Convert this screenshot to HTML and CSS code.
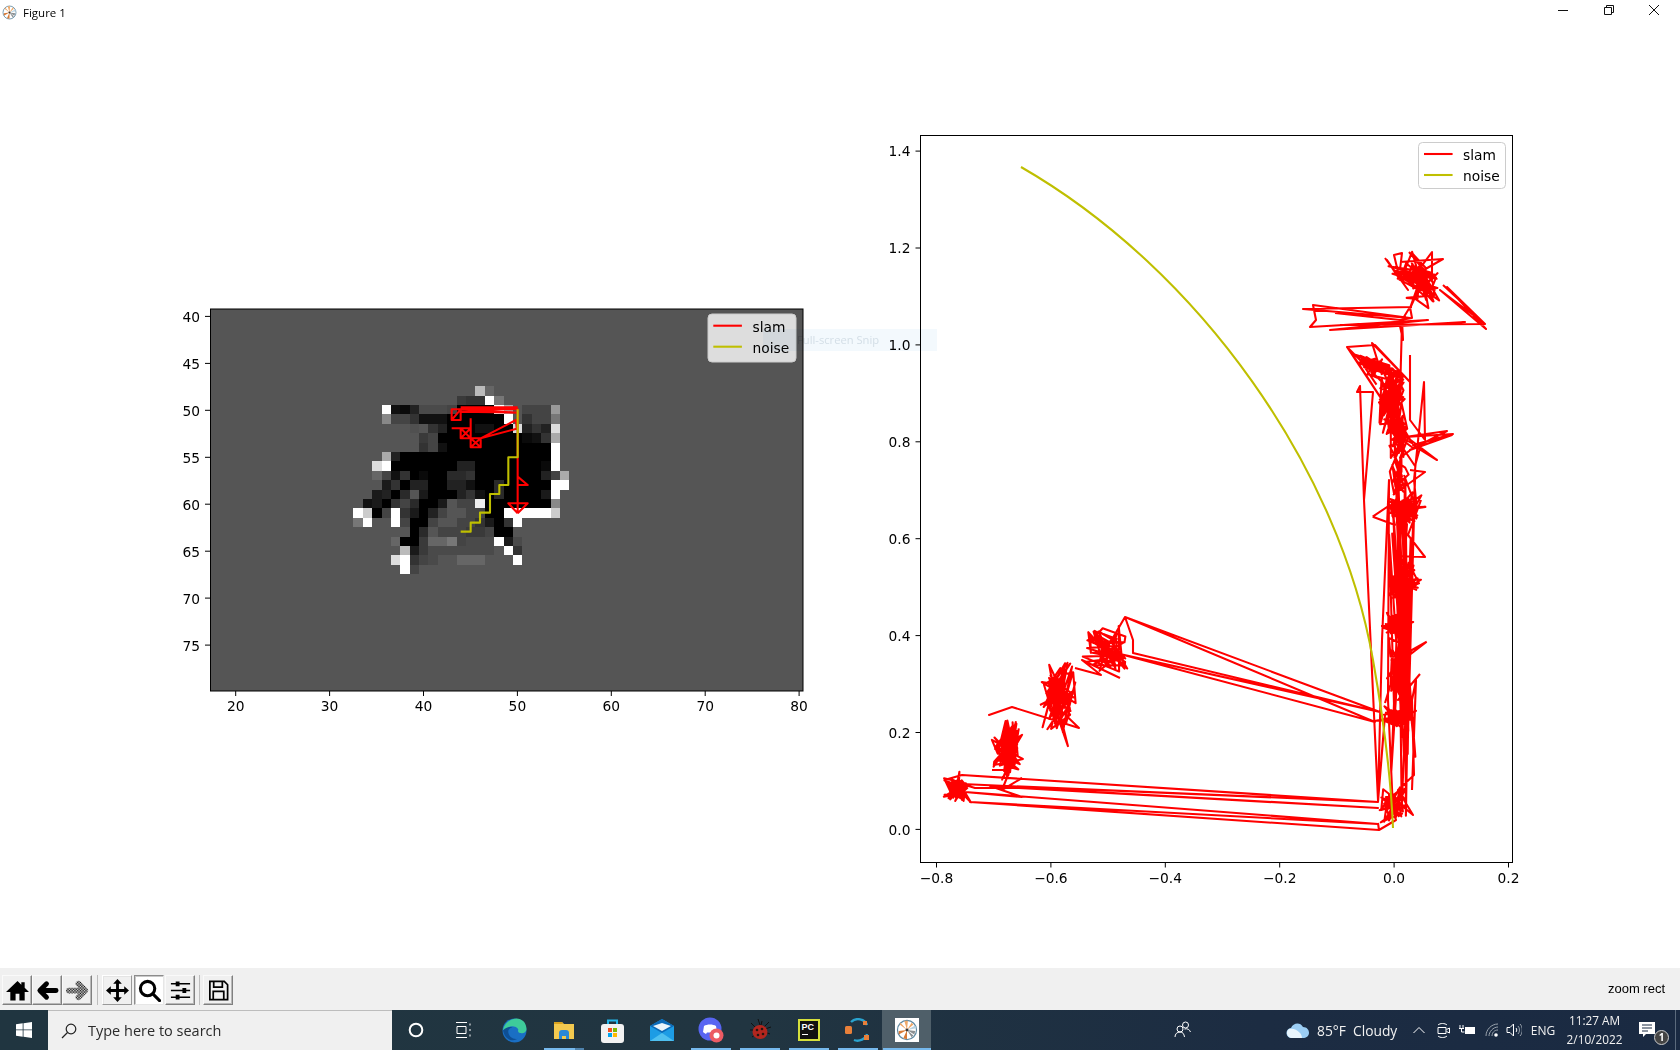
FILE: index.html
```html
<!DOCTYPE html>
<html lang="en">
<head>
<meta charset="utf-8">
<title>Figure 1</title>
<link rel="stylesheet" href="styles.css">
</head>
<body>
<svg class="defs" width="0" height="0" aria-hidden="true">
  <defs>
    <pattern id="dither" width="2" height="2" patternUnits="userSpaceOnUse" patternTransform="scale(.82)">
      <rect width="1" height="1" fill="#000"/><rect x="1" y="1" width="1" height="1" fill="#000"/>
    </pattern>
    <symbol id="mpl" viewBox="0 0 24 24">
      <circle cx="12" cy="12" r="10.4" fill="#fff" stroke="#5f8aa3" stroke-width="1.3"/>
      <path d="M12 12 4 6l1-2zM12 12 9 2h4zM12 12l5-8 2 2z" fill="#f0a868"/>
      <path d="M12 12 3 13v4zM12 12l-4 9 4 1z" fill="#d87a35"/>
      <path d="M12 12l9 1-1 4zM12 12l5 8 2-2z" fill="#8a8f92"/>
      <path d="M12 12 21 7l1 3z" fill="#b9d3e2"/>
      <circle cx="12" cy="12" r="1.6" fill="#333"/>
    </symbol>
  </defs>
</svg>

<header class="titlebar">
  <svg class="title-icon" width="15" height="15"><use href="#mpl"/></svg>
  <span class="title-text">Figure 1</span>
  <div class="winctl">
    <span class="winbtn"><svg width="10" height="10" viewBox="0 0 10 10"><path d="M0 5.5h10" class="ctl"/></svg></span>
    <span class="winbtn"><svg width="10" height="10" viewBox="0 0 10 10"><path d="M.5 2.5h7v7h-7zM2.5 2.5v-2h7v7h-2" class="ctl"/></svg></span>
    <span class="winbtn"><svg width="10" height="10" viewBox="0 0 10 10"><path d="M0 0l10 10M10 0L0 10" class="ctl"/></svg></span>
  </div>
</header>

<main class="figure">
  <svg class="canvas" width="1680" height="944" viewBox="0 24 1680 944">
    <!-- left axes -->
    <rect x="210.5" y="309" width="592.500" height="382" class="bgmap"/>
    <g id="heat" shape-rendering="crispEdges"></g>
    <g transform="translate(340 370) scale(.33333)">
      <path class="red3" d="M533 430V118H335V150L362 118V150H335M362 118 533 128 362 125M533 430 505 400H563L533 430M533 320 563 345H533M392 145V175H335M392 175H362V205H392V175L362 205M362 175 392 205M392 205 392 232H422V205H392L422 232 392 232 422 205 528 150 530 176 422 205M362 112H533"/>
      <path class="yel3" d="M533 118V262H505V345H478V372H450V428H420V458H392V485H362"/>
    </g>
    <rect x="210.5" y="309" width="592.500" height="382" class="frame"/>
    <path class="tick" d="M235.7 691v5M329.6 691v5M423.5 691v5M517.4 691v5M611.3 691v5M705.2 691v5M799.1 691v5M210 316.4h-5M210 363.4h-5M210 410.300h-5M210 457.3h-5M210 504.2h-5M210 551.2h-5M210 598.1h-5M210 645.1h-5"/>
    <g class="lab mid">
      <text x="235.7" y="711">20</text><text x="329.6" y="711">30</text><text x="423.5" y="711">40</text><text x="517.4" y="711">50</text><text x="611.3" y="711">60</text><text x="705.2" y="711">70</text><text x="799.1" y="711">80</text>
    </g>
    <g class="lab end">
      <text x="200" y="322">40</text><text x="200" y="369">45</text><text x="200" y="416">50</text><text x="200" y="463">55</text><text x="200" y="510">60</text><text x="200" y="557">65</text><text x="200" y="604">70</text><text x="200" y="651">75</text>
    </g>
    <rect x="708" y="314" width="88" height="48" rx="4" class="legend"/>
    <path class="red" d="M713.3 325.7h28.6"/><path class="yel" d="M713.3 346.7h28.6"/>
    <g class="lab"><text x="752.6" y="332">slam</text><text x="752.6" y="353">noise</text></g>

    <!-- right axes -->
    <g id="scribble"></g>
    <path class="yel" d="M1021 167C1200 270 1340 470 1373 660C1384 722 1391 780 1393 828"/>
    <rect x="920.5" y="135.5" width="592" height="727" class="frame"/>
    <path class="tick" d="M936.5 862.5v5M1050.9 862.5v5M1165.3 862.5v5M1279.7 862.5v5M1394.1 862.5v5M1508.5 862.5v5M920.5 829.4h-5M920.5 732.5h-5M920.5 635.6h-5M920.5 538.7h-5M920.5 441.8h-5M920.5 344.9h-5M920.5 248h-5M920.5 151.1h-5"/>
    <g class="lab mid">
      <text x="936.5" y="883">−0.8</text><text x="1050.9" y="883">−0.6</text><text x="1165.3" y="883">−0.4</text><text x="1279.7" y="883">−0.2</text><text x="1394.1" y="883">0.0</text><text x="1508.5" y="883">0.2</text>
    </g>
    <g class="lab end">
      <text x="910.5" y="834.7">0.0</text><text x="910.5" y="737.8">0.2</text><text x="910.5" y="640.9">0.4</text><text x="910.5" y="544">0.6</text><text x="910.5" y="447.1">0.8</text><text x="910.5" y="350.2">1.0</text><text x="910.5" y="253.3">1.2</text><text x="910.5" y="156.4">1.4</text>
    </g>
    <rect x="1418.5" y="142.5" width="87" height="46" rx="4" class="legend-light"/>
    <path class="red" d="M1424 154h28.6"/><path class="yel" d="M1424 175h28.6"/>
    <g class="lab"><text x="1463" y="159.500">slam</text><text x="1463" y="180.500">noise</text></g>

    <!-- leftover snip flyout -->
    <rect x="763" y="329" width="174" height="22" class="ghost"/>
    <text x="797" y="344" class="ghost-text">Full-screen Snip</text>
  </svg>
</main>

<section class="toolbar">
  <button class="tb"><svg viewBox="0 0 24 24"><path d="M12 2 0 13.500H4.500V22.500H10V15.500h4V22.500h5.500V13.500H24L19.500 9.200V3.500h-3.500v2.400z"/></svg></button>
  <button class="tb"><svg viewBox="0 0 24 24"><path class="arrow" d="M11 5 4 12l7 7M5 12h16"/></svg></button>
  <button class="tb"><svg viewBox="0 0 24 24"><path class="arrow dith" d="M13 5l7 7-7 7M19 12H3"/></svg></button>
  <span class="sep"></span>
  <button class="tb lit"><svg viewBox="0 0 24 24"><path d="M12 0l4.500 5H13.500V10.500H19V7.500l5 4.500-5 4.500V13.500H13.500V19h3L12 24l-4.500-5h3V13.500H5v3L0 12l5-4.500v3h5.500V5h-3z"/></svg></button>
  <button class="tb on"><svg viewBox="0 0 24 24"><circle cx="10" cy="10" r="7.500" class="lens"/><path class="lens" d="M15.500 15.500l7 7"/></svg></button>
  <button class="tb"><svg viewBox="0 0 24 24"><path class="thin" d="M2 5h20M2 12h20M2 19h20"/><path d="M7 2.500h4v5H7zM14 9.500h4v5h-4zM7 16.500h4v5H7z"/></svg></button>
  <span class="sep"></span>
  <button class="tb"><svg viewBox="0 0 24 24"><path class="floppy" d="M3 2.500h15l3.500 3.500v15.500h-18.500zM7 2.500v6h9v-6M6.500 21.500v-8.500h11v8.500"/></svg></button>
  <span class="status">zoom rect</span>
</section>

<footer class="taskbar">
  <span class="start"><svg width="16" height="16" viewBox="0 0 16 16"><path d="M0 2.300 6.700 1.300V7.500H0zM7.500 1.200 16 0V7.500H7.500zM0 8.300H6.700V14.700L0 13.700zM7.500 8.300H16V16L7.500 14.800z" fill="#fff"/></svg></span>
  <label class="search">
    <svg width="16" height="16" viewBox="0 0 16 16"><circle cx="10" cy="6" r="4.800" class="sico"/><path class="sico" d="M6.500 9.500 1 15"/></svg>
    <span class="search-text">Type here to search</span>
  </label>
  <span class="tbtn"><svg width="16" height="16" viewBox="0 0 16 16"><circle cx="8" cy="8" r="6.300" class="white2"/></svg></span>
  <span class="tbtn"><svg width="16" height="16" viewBox="0 0 16 16"><path class="white1" d="M0 .5h11M0 15.500h11M1 4.500h9v7H1zM14 1.500v2M14 7v2M14 12.500v2"/></svg></span>

  <div class="apps">
    <span class="app"><svg width="25" height="25" viewBox="0 0 24 24"><circle cx="12" cy="12" r="11.500" fill="#1a6fc4"/><path d="M1 11C3 3 10 .5 14 .5c5 0 9.500 4 9.500 10 0 3-3 4.500-6 4-2-.4-2.500-2-1.800-3.500C14 8 9 7 6 9c-2.500 1.600-4 3.500-5 2z" fill="#3ecb9a"/><path d="M6 13c0 5 5 8 9 7-5 3-12 1-14-8 2-3 7-4 9-3-2 0-4 2-4 4z" fill="#0e4f94"/></svg></span>
    <span class="app run-file"><svg width="22" height="20" viewBox="0 0 22 20"><path d="M1 2h8l2 2h10v15H1z" fill="#f3c94f"/><path d="M1 2h8l1 2H1z" fill="#d9a21e"/><path d="M6 13c0-2 1-3 3-3h4c2 0 3 1 3 3v6h-3v-3H9v3H6z" fill="#2b88d8"/></svg></span>
    <span class="app"><svg width="23" height="25" viewBox="0 0 23 25"><path class="bag" d="M7 7V2.500h9V7"/><rect y="6" width="23" height="19" rx="3" fill="#f2f2f2"/><rect x="7" y="10" width="4" height="4" fill="#f25022"/><rect x="12" y="10" width="4" height="4" fill="#7fba00"/><rect x="7" y="15" width="4" height="4" fill="#00a4ef"/><rect x="12" y="15" width="4" height="4" fill="#ffb900"/></svg></span>
    <span class="app"><svg width="24" height="22" viewBox="0 0 24 22"><path d="M0 7 12 0l12 7v15H0z" fill="#1d9ce5"/><path d="M0 7 12 0l12 7-12 7z" fill="#0b6ab8"/><path d="M3 7 12 4l9 3-9 5z" fill="#e9f4fb"/><path d="M0 22 12 14l12 8z" fill="#4fc0f0"/></svg></span>
    <span class="app run"><svg width="26" height="26" viewBox="0 0 26 26"><circle cx="12" cy="12" r="11.500" fill="#5865f2"/><path d="M6 9c3-2 9-2 12 0l1 6c-2 1.500-3 2-3 2l-1-1.500h-6L8 17s-1-.5-3-2z" fill="#fff"/><circle cx="18.500" cy="18.500" r="7" fill="#ec5b63"/><circle cx="18.500" cy="18.500" r="3" fill="#fff"/></svg></span>
    <span class="app run"><svg width="24" height="24" viewBox="0 0 24 24"><path class="bugleg" d="M3 5l5 5M2 12h5M4 19l4-3M21 4l-5 5M23 9l-6 2M22 16l-5-2M14 3l-1 4M10 1l2 6"/><ellipse cx="12" cy="14" rx="7.500" ry="7" fill="#b3261e"/><circle cx="9" cy="12" r="1.300" fill="#2a1410"/><circle cx="14" cy="11" r="1.300" fill="#2a1410"/><circle cx="10" cy="17" r="1.300" fill="#2a1410"/><circle cx="15" cy="16" r="1.300" fill="#2a1410"/></svg></span>
    <span class="app run"><span class="pc"><span class="pc-t">PC</span><span class="pc-l"></span></span></span>
    <span class="app run"><svg width="25" height="25" viewBox="0 0 25 25"><path class="ring" d="M6 4C11-1 20 1 22 7M22 16c-1 5-8 8-13 6"/><rect y="8" width="7" height="8" rx="1.500" fill="#e9803a"/><rect x="18" y="3" width="4" height="4" fill="#e9803a"/><rect x="19" y="17" width="5" height="5" fill="#e9803a"/></svg></span>
    <span class="app active"><span class="tile"><svg width="22" height="22"><use href="#mpl"/></svg></span></span>
  </div>

  <div class="tray">
    <span class="t-people"><svg width="18" height="18" viewBox="0 0 18 18"><circle cx="11.500" cy="4" r="3" class="white1"/><circle cx="6" cy="8" r="3" class="white1"/><path class="white1" d="M1 16c0-3 2-5 5-5s4 2 4.500 5M10.500 8c3-.8 5 .5 6 3"/></svg></span>
    <span class="t-weather">
      <svg width="23" height="16" viewBox="0 0 23 16"><path d="M6 16a5 5 0 0 1-1-10C7 1 14-.5 17 5c4 0 6 3 6 6s-3 5-6 5z" fill="#9bcdf4"/><path d="M6 16a5 5 0 0 1-3-9c3-1 8 0 11 4 2 2 2 5 2 5z" fill="#e9f5fd"/></svg>
      <span>85°F&nbsp; Cloudy</span>
    </span>
    <span class="t-i w26"><svg width="12" height="8" viewBox="0 0 12 8"><path class="white1" d="M.5 7 6 1.500 11.500 7"/></svg></span>
    <span class="t-i w23"><svg width="13" height="17" viewBox="0 0 13 17"><path class="white1" d="M1 3c2-2 7-2 9 0M1 14c2 2 7 2 9 0M1 5.500h8v6H1zM9.500 7.500 12.500 6v5l-3-1.500"/></svg></span>
    <span class="t-i w25"><svg width="17" height="12" viewBox="0 0 17 12"><path d="M6 3h10v7H6z" fill="#fff"/><path class="white1" d="M1 1v3M4 1v3M0 4.500h5M2.500 5v3h3"/></svg></span>
    <span class="t-i w24"><svg width="14" height="14" viewBox="0 0 14 14"><path class="dim1" d="M1 13C1 7 6 1 13 1M4 13c0-4 4-9 9-9M7 13c0-3 2-6 6-6"/><circle cx="11" cy="12" r="1.800" fill="#fff"/></svg></span>
    <span class="t-i w20"><svg width="16" height="14" viewBox="0 0 16 14"><path class="white1" d="M1 4.500h3L7.500 1v12L4 9.500H1zM10 5c1 1 1 3 0 4"/><path class="dim1" d="M12 3c2 2 2 6 0 8M14 1c3 3 3 9 0 12"/></svg></span>
    <span class="t-eng">ENG</span>
    <span class="t-clock"><span>11:27 AM</span><span>2/10/2022</span></span>
    <span class="t-notif">
      <svg width="16" height="16" viewBox="0 0 16 16"><path d="M0 0h16v12H7l-3 3v-3H0z" fill="#fff"/><path d="M3 3h10M3 6h10M3 9h6" stroke="#1b2a42" stroke-width="1"/></svg>
      <span class="badge">1</span>
    </span>
    <span class="t-desk"></span>
  </div>
</footer>
<script src="script.js"></script>
</body>
</html>
```

FILE: styles.css
```css
* { box-sizing: border-box; }
html, body { margin: 0; height: 100%; }
body {
  width: 1680px; height: 1050px; overflow: hidden;
  display: flex; flex-direction: column;
  background: #fff;
  font-family: "Open Sans", "Noto Sans", sans-serif;
}
.defs { position: absolute; }

.titlebar { height: 24px; display: flex; align-items: center; padding-left: 2px; flex: none; }
.title-icon { margin-right: 6px; }
.title-text { font-size: 11.5px; color: #000; }
.winctl { margin-left: auto; margin-right: 3px; display: flex; align-self: flex-start; padding-top: 5px; }
.winbtn { width: 45.5px; display: flex; justify-content: center; }
.ctl { fill: none; stroke: #111; stroke-width: 1; }

.figure { height: 944px; flex: none; }
.canvas { display: block; }
.bgmap { fill: #555; }
.frame { fill: none; stroke: #000; stroke-width: 1; }
.tick { fill: none; stroke: #000; stroke-width: 1; }
.lab text { font-family: "DejaVu Sans", sans-serif; font-size: 13.8px; fill: #000; }
.mid { text-anchor: middle; }
.end { text-anchor: end; }
.legend { fill: #ddd; stroke: #ccc; stroke-width: 1; }
.legend-light { fill: #fff; stroke: #ccc; stroke-width: 1; }
.red { fill: none; stroke: #f00; stroke-width: 2.08; stroke-linejoin: round; }
.yel { fill: none; stroke: #bfbf00; stroke-width: 2.08; stroke-linejoin: round; }
.red3 { fill: none; stroke: #f00; stroke-width: 6.25; stroke-linejoin: round; }
.yel3 { fill: none; stroke: #bfbf00; stroke-width: 6.25; stroke-linejoin: round; }
.ghost { fill: #f3f9fd; mix-blend-mode: multiply; }
.ghost-text { font-family: "Open Sans", sans-serif; font-size: 11.2px; fill: #dfe5e9; mix-blend-mode: multiply; }

.toolbar {
  height: 42px; flex: none; background: #f0f0f0;
  display: flex; align-items: flex-start; padding: 7px 0 0 2px;
}
.tb {
  width: 30px; height: 30px; padding: 2px; margin: 0;
  background: #f0f0f0;
  border: 1px solid; border-color: #fafafa #808080 #808080 #fafafa;
  box-shadow: inset -1px -1px 0 #b8b8b8;
  display: flex; align-items: center; justify-content: center;
}
.tb svg { width: 23px; height: 23px; display: block; }
.tb.lit { border-color: #fff #999 #999 #fff; box-shadow: inset 1px 1px 0 #e4e4e4; }
.tb.on { background: #fff; margin: 0 1px 0 2px; border-color: #8c8c8c #e6e6e6 #e6e6e6 #8c8c8c; box-shadow: inset 1px 1px 0 #c8c8c8; }
.arrow { fill: none; stroke: #000; stroke-width: 5; stroke-linecap: round; stroke-linejoin: round; }
.dith { stroke: url(#dither); stroke-width: 6; }
.lens { fill: none; stroke: #000; stroke-width: 3.2; stroke-linecap: round; }
.thin { fill: none; stroke: #000; stroke-width: 1.4; }
.floppy { fill: none; stroke: #000; stroke-width: 1.8; }
.sep { width: 1px; height: 30px; background: #bdbdbd; margin: 0 4px 0 5px; }
.sep:nth-of-type(2) { margin-right: 3px; margin-left: 4px; }
.status { margin-left: auto; margin-right: 15px; margin-top: 6px; font: 13px "Liberation Sans", Arial, sans-serif; color: #000; }

.taskbar {
  height: 40px; flex: none; display: flex; align-items: stretch;
  background: linear-gradient(90deg, #203540 0%, #213541 45%, #1c2c42 75%, #1a2a42 100%);
  color: #fff;
}
.start { width: 48px; display: flex; align-items: center; justify-content: center; }
.search {
  width: 344px; background: #f0f0f0; border-top: 1px solid #bdbdbd;
  display: flex; align-items: center; padding-left: 13px; gap: 11px;
}
.search-text { font-size: 14.5px; color: #2b2b2b; }
.sico { fill: none; stroke: #222; stroke-width: 1.2; }
.tbtn { width: 48px; display: flex; align-items: center; justify-content: center; }
.white1 { fill: none; stroke: #fff; stroke-width: 1; }
.white2 { fill: none; stroke: #fff; stroke-width: 2; }
.dim1 { fill: none; stroke: #9aa3ad; stroke-width: 1; }

.apps { display: flex; margin-left: 2px; }
.app {
  width: 49px; position: relative;
  display: flex; align-items: center; justify-content: center;
}
.app.run::after, .app.run-file::after {
  content: ""; position: absolute; left: 5px; right: 4px; bottom: 0; height: 2px; background: #76b9ed;
}
.app.run-file::after { background: linear-gradient(90deg, #76b9ed 0 78%, #4f83ad 78%); }
.app.active { background: #4f5f69; }
.app.active::after { content: ""; position: absolute; left: 1px; right: 0; bottom: 0; height: 2px; background: #76b9ed; }
.tile { width: 24px; height: 24px; background: #fff; display: flex; align-items: center; justify-content: center; }
.bag { fill: none; stroke: #25b5e8; stroke-width: 2; }
.bugleg { fill: none; stroke: #111; stroke-width: 1; }
.ring { fill: none; stroke: #2aa3cf; stroke-width: 2.400; }
.pc {
  width: 22px; height: 22px; background: #111; border: 2px solid #d6e03c;
  display: flex; flex-direction: column; padding: 1px 2px;
}
.pc-t { font: 700 9px/10px "Liberation Sans", sans-serif; color: #fff; }
.pc-l { width: 6px; height: 1px; background: #fff; margin-top: 2px; }

.tray { margin-left: auto; display: flex; align-items: stretch; width: 517px; }
.t-people { width: 40px; display: flex; align-items: center; justify-content: center; }
.t-weather {
  width: 120px; margin-left: 83px; display: flex; align-items: center; gap: 8px;
  font-size: 13.8px; color: #f2f2f2; white-space: nowrap;
}
.t-i { display: flex; align-items: center; justify-content: center; }
.w26 { width: 26px; } .w23 { width: 23px; } .w25 { width: 25px; } .w24 { width: 24px; } .w20 { width: 20px; }
.t-eng { width: 38px; font-size: 12px; display: flex; align-items: center; justify-content: center; color: #f2f2f2; }
.t-clock {
  width: 65px; display: flex; flex-direction: column; align-items: center; justify-content: center;
  font-size: 11.8px; line-height: 19px; color: #f2f2f2;
}
.t-notif { width: 48px; position: relative; display: flex; align-items: center; justify-content: center; padding-right: 8px; }
.badge {
  position: absolute; left: 27px; top: 20px; width: 15px; height: 15px; border-radius: 50%;
  background: #444; border: 1px solid #ccc; color: #fff;
  font: 700 10px/13px "Open Sans", sans-serif; text-align: center;
}
.t-desk { width: 5px; border-left: 1px solid #5b6a7c; }
```

FILE: script.js
```js
// Heat map data: [row, first column, grey values]
var rows = [
[48,46,"bb 66"],
[49,44,"3a 33 33 ff 77"],
[50,36,"ff 11 0a 22 4a 4a 4a 44 00 00 00 00 ff aa 55 44 44 44 99"],
[51,36,"88 44 44 33 11 11 11 00 00 00 00 00 00 ff 55 33 44 44 77"],
[52,39,"50 55 33 22 00 00 00 11 11 00 00 dd 22 33 22 dd"],
[53,40,"3a 44 00 00 00 00 00 00 00 00 00 0a 11 33 aa"],
[54,40,"33 44 11 00 00 00 00 00 00 00 00 00 00 00 ff"],
[55,36,"aa 22 00 00 00 00 00 00 00 00 00 00 00 00 00 00 00 00 ff"],
[56,35,"dd ff 00 00 00 00 00 00 00 22 22 00 00 00 00 00 00 00 0a ff"],
[57,35,"66 44 11 33 00 0a 00 00 2a 2a 33 00 00 00 00 00 00 00 22 44 aa"],
[58,36,"1a 33 00 22 22 00 00 22 22 11 00 00 2a 00 00 00 00 00 ff ff"],
[59,35,"1a 22 00 2a 55 1a 00 00 00 22 33 11 00 2a 00 00 00 00 1a ff"],
[60,34,"11 1a 00 33 44 2a 00 00 1a 55 44 44 ee 00 00 00 00 00 00 00 88"],
[61,33,"ff cc 00 44 ff 33 1a 00 22 44 55 55 44 44 00 00 ff ff ff ff ff cc"],
[62,33,"77 ff 55 55 ff 44 00 00 44 55 55 44 44 33 1a 00 33 ff"],
[63,39,"00 2a 55 44 44 44 3a 3a 44 00 00 55"],
[64,37,"66 00 00 3a 66 66 77 44 4a 4a 4a ff 1a 4a"],
[65,38,"bb 1a 3a 4a 4a 4a 4a 4a 4a 4a 55 ff 33"],
[66,37,"dd ff 33 44 4a 55 55 66 66 66 55 55 55 ff"],
[67,38,"ff 44"]
];
var NS = "http://www.w3.org/2000/svg";
var heat = document.getElementById("heat");
var P = 9.39;
rows.forEach(function (row) {
  row[2].split(" ").forEach(function (v, i) {
    var c = row[1] + i;
    var x0 = Math.round(517.7 + (c - 50.5) * P), x1 = Math.round(517.7 + (c - 49.5) * P);
    var y0 = Math.round(409.8 + (row[0] - 50.5) * P), y1 = Math.round(409.8 + (row[0] - 49.5) * P);
    var r = document.createElementNS(NS, "rect");
    r.setAttribute("x", x0); r.setAttribute("y", y0);
    r.setAttribute("width", x1 - x0); r.setAttribute("height", y1 - y0);
    r.setAttribute("fill", "#" + v + v + v);
    heat.appendChild(r);
  });
});

// SLAM trajectory: seeded random clusters joined by the measured long segments
var seed = 12345;
function rnd() { seed = (seed * 1664525 + 1013904223) % 4294967296; return seed / 4294967296; }
function bell() { return rnd() + rnd() - 1; }
function blob(cx, cy, rx, ry, n, skew) {
  var pts = [];
  for (var i = 0; i < n; i++) {
    var k = rnd() < 0.15 ? 1.35 : 1.05;
    var dy = bell() * ry * k;
    var dx = bell() * rx * k + (skew || 0) * dy;
    pts.push([cx + dx, cy + dy]);
  }
  return pts;
}
function column(n, y0, y1) {
  var pts = [];
  for (var i = 0; i < n; i++) {
    pts.push([1389 + rnd() * 28, i % 2 ? y0 + rnd() * 90 : y1 - rnd() * 120]);
  }
  return pts;
}
var parts = [
  // bottom left clusters
  blob(1007, 748, 16, 33, 130),
  blob(1059, 698, 19, 37, 110),
  blob(1108, 650, 24, 26, 75, 0.3),
  blob(958, 790, 15, 17, 60),
  [[948,779],[962,775],[1378,802],[962,784],[975,788],[1019,788],[1378,808],[990,786],[1022,797],[965,792],[1378,824],[970,802],[1379,830],[1378,823]],
  [[1012,707],[989,715],[1012,707],[1079,728],[1050,700],[1040,705]],
  [[1085,662],[1100,660],[1125,617],[1133,640],[1133,653],[1380,712],[1120,654],[1375,722],[1125,617],[1380,712]],
  [[1022,778],[1002,790],[1010,770],[992,770]],
  [[1075,668],[1101,675],[1082,660],[1120,678]],
  // vertical column
  blob(1393, 805, 16, 20, 55),
  [[1378,802],[1385,715],[1378,800],[1382,640],[1389,480],[1388,700],[1393,810]],
  [[1379,830],[1396,820],[1389,795],[1413,815],[1398,790],[1414,775],[1412,700],[1416,680],[1412,790]],
  column(26, 450, 820),
  blob(1400, 717, 18, 11, 85),
  blob(1399, 668, 9, 32, 100),
  blob(1399, 625, 16, 11, 40),
  blob(1404, 578, 17, 23, 70),
  blob(1404, 510, 18, 16, 70),
  [[1372.7,516.7],[1390,505],[1395,525],[1372.7,516.7]],
  [[1421,500],[1408,535],[1425,557],[1395,556]],
  [[1381,626],[1398,625],[1386,633]],
  [[1426.7,641.7],[1403,660],[1412,650],[1426.7,641.7]],
  [[1420,674],[1398,700],[1410,690]],
  [[1385,703],[1398,660]],
  [[1360,386],[1357,392],[1373,392],[1364,500],[1378,800]],
  [[1357,392],[1360,386],[1364,500]],
  // upper column and star
  blob(1376, 368, 18, 17, 45, 0.75),
  blob(1391, 398, 15, 36, 90),
  blob(1398, 432, 14, 27, 60),
  blob(1399, 475, 11, 30, 30),
  [[1347,347],[1392,415],[1349,349],[1400,400],[1347,347],[1375,345],[1410,382],[1372,343],[1382,375]],
  [[1410,355],[1410,420],[1425,440],[1424,382],[1414,480],[1417,510],[1404,475]],
  [[1413,445],[1453,434],[1405,437],[1447,431],[1410,450],[1452,435],[1413,445],[1437,460],[1408,438],[1400,458],[1413,448],[1392,432],[1415,466],[1420,448]],
  [[1410,470],[1425,472],[1393,495]],
  // horizontal top lines
  [[1412,307],[1303,309],[1410,318],[1313,305],[1316,320],[1310,327],[1428,320],[1330,330],[1465,322],[1400,326],[1403,340],[1402,320],[1410,307],[1412,318],[1400,320],[1335,313]],
  [[1402,322],[1400,395]],
  // top star
  blob(1418, 279, 24, 26, 80, 0.45),
  [[1385,258],[1408,290],[1387,260],[1400,280],[1394,255],[1402,253],[1400,270]],
  [[1409,252],[1432,280],[1432,252],[1415,275],[1443,259],[1400,262]],
  [[1443,285],[1485,324],[1440,290],[1486,329],[1447,287],[1485,324],[1340,325]]
];
var d = "";
parts.forEach(function (pts) {
  d += "M" + pts.map(function (p) { return p[0].toFixed(1) + " " + p[1].toFixed(1); }).join("L");
});
var line = document.createElementNS(NS, "path");
line.setAttribute("class", "red");
line.setAttribute("d", d);
document.getElementById("scribble").appendChild(line);
```
